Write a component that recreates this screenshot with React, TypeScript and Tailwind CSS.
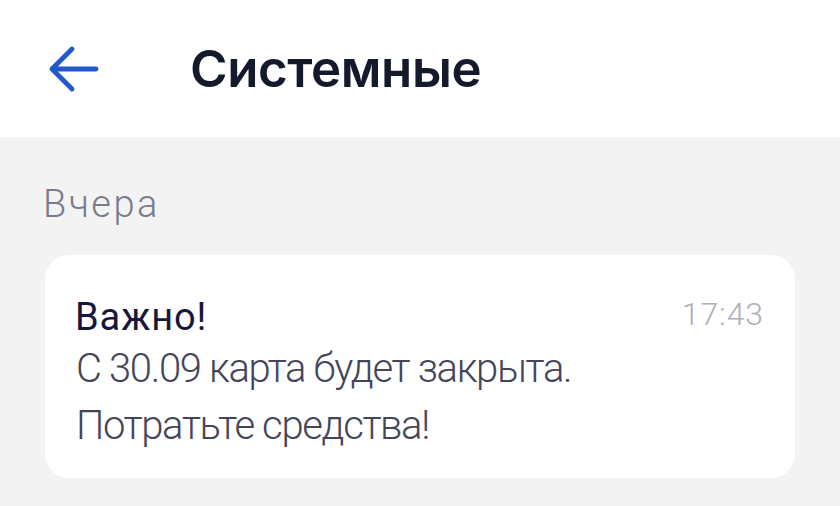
function BackArrow() {
  return (
    <svg width="52" height="48" viewBox="0 0 52 48" fill="none" className="text-[#2158cc]">
      <path d="M24 4 L4 24 L24 44 M4 24 L48 24" stroke="currentColor" strokeWidth="4.8" strokeLinecap="round" strokeLinejoin="round" />
    </svg>
  );
}

function App() {
  return (
    <div className="w-[840px] h-[506px] overflow-hidden bg-[#f3f3f4]" style={{ fontFamily: "'Roboto', sans-serif" }}>
      <div className="h-[137px] bg-white flex items-center">
        <div className="w-[192px] pl-[48px] pt-[1px]">
          <BackArrow />
        </div>
        <h1 className="text-[51px] font-semibold text-[#141a2c] tracking-[-0.4px] -ml-[2px] pt-[2px]" style={{ fontFamily: "'Inter', sans-serif" }}>
          Системные
        </h1>
      </div>
      <div className="px-[45px]">
        <div className="pt-[46px] pb-[30px] text-[38px] leading-[42px] text-[#7a7b8c] font-light tracking-[2.4px]">
          <span className="-ml-[2px]">Вчера</span>
        </div>
        <div className="bg-white rounded-[24px] h-[223px] pl-[31px] pr-[31px] pt-[40px] flex justify-between">
          <div className="text-[#45455a] font-light">
            <div className="text-[38px] leading-[44px] text-[#17163c] tracking-[0.9px] font-normal -ml-[1px]">Важно!</div>
            <div className="text-[40px] leading-[56px] tracking-[-1.35px] mt-[2px]">С 30.09 карта будет закрыта.</div>
            <div className="text-[40px] leading-[58px] tracking-[-1.35px]">Потратьте средства!</div>
          </div>
          <div className="text-[32px] leading-[34px] text-[#aeaeb8] tracking-[0.9px] font-light pt-[2px]">17:43</div>
        </div>
      </div>
    </div>
  );
}

export default App;
